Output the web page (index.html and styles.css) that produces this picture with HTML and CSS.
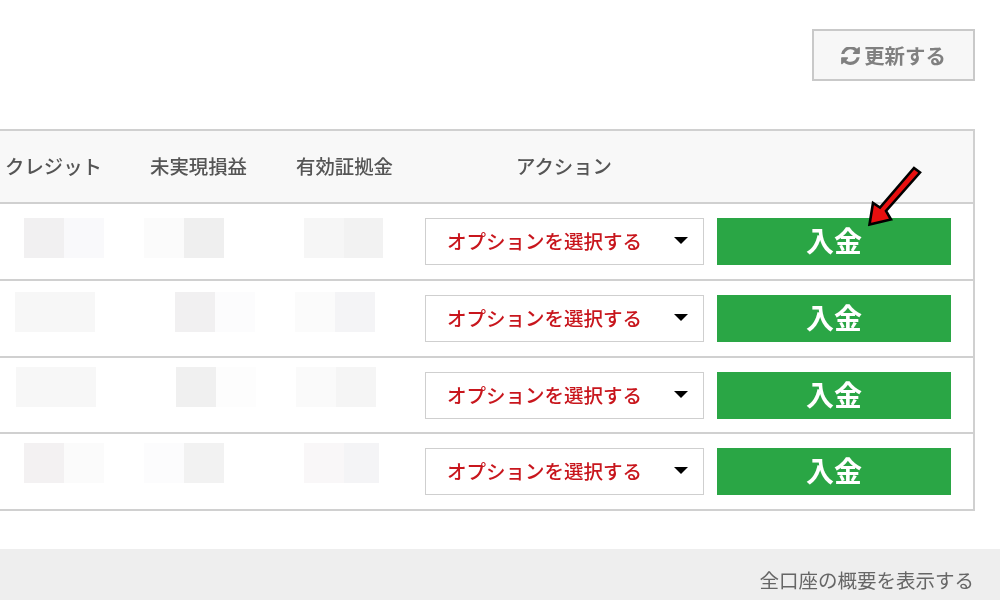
FILE: index.html
```html
<!DOCTYPE html>
<html lang="ja">
<head>
<meta charset="utf-8">
<title>口座一覧</title>
<link rel="stylesheet" href="styles.css">
</head>
<body>
<div class="page">
  <div class="toolbar">
    <button class="refresh" type="button">
      <svg class="refresh-icon" viewBox="128 192 1536 1472" aria-hidden="true">
        <path d="M1639 1056q0 5-1 7-64 268-268 434.5t-478 166.5q-146 0-282.5-55t-243.5-157l-129 129q-19 19-45 19t-45-19-19-45v-448q0-26 19-45t45-19h448q26 0 45 19t19 45-19 45l-137 137q71 66 161 102t187 36q134 0 250-65t186-179q11-17 53-117 8-23 30-23h192q13 0 22.5 9.5t9.5 22.5zm25-800v448q0 26-19 45t-45 19h-448q-26 0-45-19t-19-45 19-45l138-138q-148-137-349-137-134 0-250 65t-186 179q-11 17-53 117-8 23-30 23h-199q-13 0-22.5-9.5t-9.5-22.5v-7q65-268 270-434.5t480-166.5q146 0 284 55.5t245 156.5l130-129q19-19 45-19t45 19 19 45z" fill="#808080"/>
      </svg>更新する
    </button>
  </div>

  <div class="table">
    <div class="row head">
      <div class="th">クレジット</div>
      <div class="th">未実現損益</div>
      <div class="th">有効証拠金</div>
      <div class="th">アクション</div>
    </div>

    <div class="row body r1">
      <div class="cell"><div class="mask m42"><i class="t-f1"></i><i class="t-f9"></i></div></div>
      <div class="cell"><div class="mask m19"><i class="t-fb"></i><i class="t-ef"></i></div></div>
      <div class="cell"><div class="mask m32 narrow"><i class="t-f6"></i><i class="t-f2"></i></div></div>
      <div class="actions">
        <div class="select"><span>オプションを選択する</span><b class="caret"></b></div>
        <button class="deposit" type="button">入金</button>
      </div>
      <svg class="arrow" viewBox="0 0 70 75" aria-hidden="true">
        <polygon points="54,8 60,12.5 26,51 31,59.5 9.5,64.5 13,43 20,47.5" fill="#e80f0f" stroke="#000" stroke-width="2.6"/>
      </svg>
    </div>

    <div class="row body r2">
      <div class="cell"><div class="mask m33"><i class="t-f7"></i><i class="t-f7"></i></div></div>
      <div class="cell"><div class="mask m50"><i class="t-f1"></i><i class="t-fc"></i></div></div>
      <div class="cell"><div class="mask m23"><i class="t-fb"></i><i class="t-f4"></i></div></div>
      <div class="actions">
        <div class="select"><span>オプションを選択する</span><b class="caret"></b></div>
        <button class="deposit" type="button">入金</button>
      </div>
    </div>

    <div class="row body r3">
      <div class="cell"><div class="mask m34"><i class="t-f7"></i><i class="t-f7"></i></div></div>
      <div class="cell"><div class="mask m51"><i class="t-f0"></i><i class="t-fd"></i></div></div>
      <div class="cell"><div class="mask m24"><i class="t-fa"></i><i class="t-f5"></i></div></div>
      <div class="actions">
        <div class="select"><span>オプションを選択する</span><b class="caret"></b></div>
        <button class="deposit" type="button">入金</button>
      </div>
    </div>

    <div class="row body r4">
      <div class="cell"><div class="mask m42"><i class="t-f3"></i><i class="t-fb"></i></div></div>
      <div class="cell"><div class="mask m19"><i class="t-fc"></i><i class="t-f2"></i></div></div>
      <div class="cell"><div class="mask m32 narrower"><i class="t-f8"></i><i class="t-f4"></i></div></div>
      <div class="actions">
        <div class="select"><span>オプションを選択する</span><b class="caret"></b></div>
        <button class="deposit" type="button">入金</button>
      </div>
    </div>
  </div>

  <div class="footer">全口座の概要を表示する</div>
</div>
</body>
</html>
```
FILE: styles.css
```css
* { box-sizing: border-box; }
html, body { margin: 0; height: 100%; background: #fff; overflow: hidden; }
body { font-family: "Noto Sans CJK JP", "Liberation Sans", sans-serif; }

.page { width: 1000px; height: 600px; display: flex; flex-direction: column; overflow: hidden; filter: blur(0.35px); }

.toolbar { height: 129px; padding: 29px 25px 0 0; display: flex; justify-content: flex-end; align-items: flex-start; }
.refresh {
  width: 163px; height: 52px; padding: 1px 0 0;
  display: flex; align-items: center; justify-content: center; gap: 4px;
  background: #f7f7f7; border: 2px solid #c9c9c9;
  color: #808080; font: 700 20.4px/1 "Noto Sans CJK JP", sans-serif;
}
.refresh-icon { width: 19px; height: 18px; }

.table {
  width: 995px; margin-left: -20px;
  border: 2px solid #d0d0d0; border-bottom: 0;
  display: flex; flex-direction: column;
}
.row {
  position: relative;
  display: grid; grid-template-columns: 143px 147px 145px 294px 1fr;
  border-bottom: 2px solid #d0d0d0;
}
.head { height: 73px; background: #f8f8f8; align-items: center; }
.th { text-align: center; font-size: 19.4px; font-weight: 500; color: #555; padding-bottom: 2px; }
.body { height: 77px; align-items: start; padding-top: 14px; }
.r3 { height: 76px; }

.mask { display: flex; height: 40px; }
.mask i { display: block; width: 40px; height: 40px; }
.r2 .mask { margin-top: -3px; }
.r3 .mask, .r4 .mask { margin-top: -5px; }
.narrow i:last-child { width: 39px; }
.narrower i:last-child { width: 35px; }
.m19 { margin-left: 19px; }
.m23 { margin-left: 23px; }
.m24 { margin-left: 24px; }
.m32 { margin-left: 32px; }
.m33 { margin-left: 33px; }
.m34 { margin-left: 34px; }
.m42 { margin-left: 42px; }
.m50 { margin-left: 50px; }
.m51 { margin-left: 51px; }

.t-ef { background: #efefef; }
.t-f0 { background: #f0f0f0; }
.t-f1 { background: #f1f0f1; }
.t-f2 { background: #f2f2f2; }
.t-f3 { background: #f3f1f2; }
.t-f4 { background: #f4f4f6; }
.t-f5 { background: #f5f5f5; }
.t-f6 { background: #f6f6f6; }
.t-f7 { background: #f7f7f7; }
.t-f8 { background: #f9f7f8; }
.t-f9 { background: #f9f9fb; }
.t-fa { background: #fafafa; }
.t-fb { background: #fbfbfb; }
.t-fc { background: #fcfcfd; }
.t-fd { background: #fdfdfd; }

.actions { grid-column: span 2; padding-left: 8px; display: flex; gap: 13px; }
.select {
  width: 279px; height: 47px; padding: 0 15px 2px 21px;
  display: flex; align-items: center; justify-content: space-between;
  background: #fff; border: 1px solid #cfcfcf;
  color: #c8161d; font-size: 19.5px; font-weight: 500;
}
.caret { width: 0; height: 0; border-left: 7px solid transparent; border-right: 7px solid transparent; border-top: 7px solid #000; }
.deposit {
  width: 234px; height: 47px; padding: 0 0 4px;
  background: #2aa645; border: 0;
  color: #fff; font: 700 28px/1 "Noto Sans CJK JP", sans-serif;
}

.arrow { position: absolute; right: 43px; top: -44px; width: 70px; height: 75px; }

.footer {
  margin-top: 38px; height: 51px; padding: 10px 26px 0 0;
  display: flex; align-items: center; justify-content: flex-end;
  background: #eee; color: #666; font-size: 19.5px;
}
```
